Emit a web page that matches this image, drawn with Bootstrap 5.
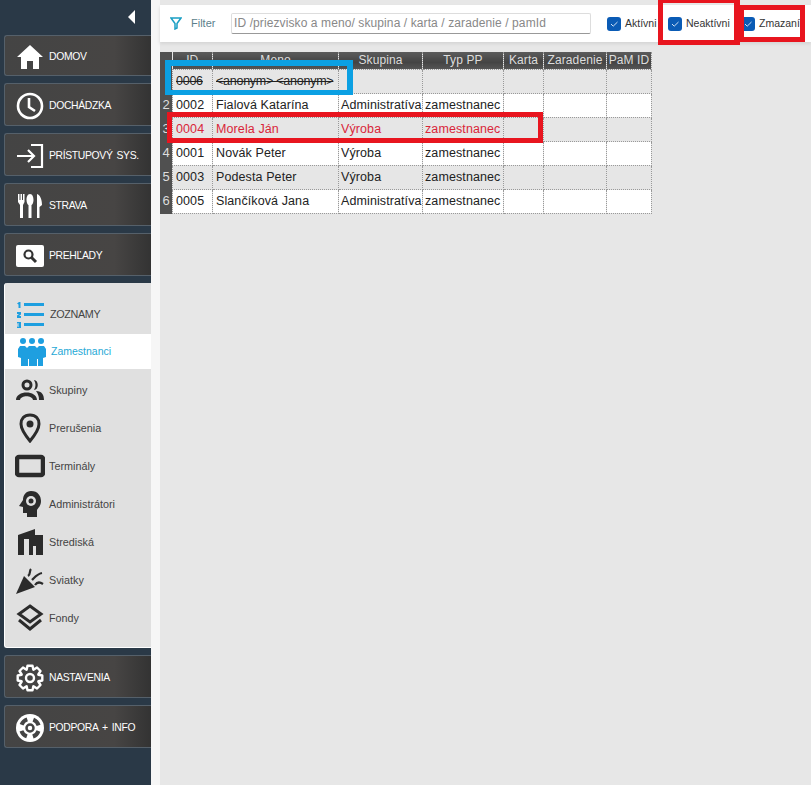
<!DOCTYPE html>
<html lang="sk">
<head>
  <meta charset="UTF-8" />
  <title>Zamestnanci</title>
  <meta name="viewport" content="width=device-width, initial-scale=1" />
  <link href="https://cdn.jsdelivr.net/npm/bootstrap@5.3.3/dist/css/bootstrap.min.css" rel="stylesheet" />
  <style>
    html, body { height: 100%; }
    body { background: #fff; font-family: "Liberation Sans", Arial, sans-serif; overflow: hidden; }
    .app-wrap { width: 811px; height: 785px; position: relative; }
    .side-col { width: 151px; background: #2a3947; padding-left: 4px; flex-shrink: 0; }
    .collapse-row { height: 35px; padding: 10px 16px 0 0; }
    .collapse-tri { width: 0; height: 0; border-top: 7px solid transparent; border-bottom: 7px solid transparent; border-right: 7px solid #fff; }
    .dark-btn { height: 43px; margin-bottom: 7px; gap: 5px; padding: 2px 0 0 11px; color: #fff; font-size: 10.4px; letter-spacing: -.35px; word-spacing: 1.500px; white-space: nowrap;
      background: linear-gradient(90deg, #444 0%, #474544 75%, #333 100%); border: 1px solid #55606a; border-right: 0; border-radius: 3px 0 0 3px; }
    .dark-btn.is-short { height: 41px; }
    .dark-btn svg { width: 28px; height: 28px; flex-shrink: 0; }
    .list-panel { background: #e0e0e0; height: 365px; border-radius: 3px 0 0 3px; margin-bottom: 7px; color: #444; font-size: 10.8px; border-left: 1px solid #fff; border-bottom: 1px solid #fff; }
    .panel-head { height: 51px; padding: 12px 0 0 11px; gap: 6px; letter-spacing: -.35px; }
    .panel-item { height: 38px; padding-left: 10px; gap: 4px; }
    .panel-item svg { width: 30px; height: 30px; flex-shrink: 0; }
    .panel-item.is-active { height: 35px; background: #fff; color: #1fa9d6; font-size: 10.5px; margin-bottom: 2px; padding-left: 12px; gap: 4px; }
    .strip-col { width: 9px; background: #f6f6f6; flex-shrink: 0; }
    .main-col { flex-grow: 1; background: #e7e7e7; padding-top: 5px; }
    .filter-bar { height: 37px; background: #fff; padding-left: 10px; box-shadow: 0 2px 3px #d5d5d5; margin-bottom: 10px; font-size: 10.5px; color: #333; }
    .filter-label { color: #5c7f8c; font-size: 11px; margin-left: 9px; width: 40px; }
    .filter-input { width: 360px; height: 21px; border: 1px solid #ddd; border-bottom-color: #999; border-radius: 2px; padding: 0 2px; font-size: 12px; color: #888; letter-spacing: .1px; }
    .filter-check { width: 14px; height: 14px; background: #0a5bb5; border-radius: 3px; flex-shrink: 0; }
    .filter-check svg { display: block; }
    .check-wrap { gap: 4px; white-space: nowrap; }
    .check-a { width: 61px; }
    .check-b { width: 73px; }
    .people-wrap { width: 492px; display: flex; }
    .row-nums { width: 13px; background: #505050; color: #ddd; font-size: 13px; text-align: center; }
    .row-nums div { height: 24px; line-height: 24px; }
    .row-nums div:first-child { height: 41px; }
    .people-table { table-layout: fixed; width: 479px; border-collapse: collapse; font-size: 12.5px; letter-spacing: .1px; color: #222; }
    .people-table th { height: 17px; padding: 0; background: linear-gradient(#5c5c5c, #444 60%, #555); color: #ddd; font-weight: 400; font-size: 12px; text-align: center; border-right: 1px dotted #999; line-height: 15px; overflow: hidden; }
    .people-table td { height: 24px; padding: 0 0 0 3px; background: #fff; border: 1px dotted #999; white-space: nowrap; overflow: hidden; line-height: 22px; }
    .people-table td:nth-child(n+3) { padding-left: 2px; }
    .people-table tr.row-alt td { background: #e6e6e6; }
    .people-table tr.row-gone td { text-decoration: line-through; letter-spacing: -.25px; }
    .people-table tr.row-red td { color: #d9263a; }
    .hl-box { position: absolute; pointer-events: none; }
    .hl-blue { left: 165px; top: 60px; width: 188px; height: 35px; border: 6px solid #0ba0e3; border-bottom-width: 5px; }
    .hl-red1 { left: 167px; top: 112px; width: 376px; height: 31px; border: 5px solid #e8151f; }
    .hl-red2 { left: 658px; top: 0; width: 82px; height: 45px; border: 5px solid #e8151f; border-top-width: 3px; border-right-width: 6px; }
    .hl-red3 { left: 739px; top: 5px; width: 66px; height: 37px; border: 5px solid #e8151f; }
  </style>
</head>
<body>

<div class="app-wrap d-flex">
  <div class="side-col">
    <div class="collapse-row d-flex justify-content-end"><div class="collapse-tri"></div></div>

    <div class="dark-btn is-short d-flex align-items-center">
      <svg viewBox="0 0 28 28" fill="#fff"><path d="M14 2 1 14h4v12h6v-8h6v8h6V14h4z"/></svg>DOMOV
    </div>
    <div class="dark-btn d-flex align-items-center">
      <svg viewBox="0 0 28 28" fill="none" stroke="#fff" stroke-width="2.6"><circle cx="14" cy="14" r="12"/><path d="M13 6v9l6 4"/></svg>DOCHÁDZKA
    </div>
    <div class="dark-btn d-flex align-items-center">
      <svg viewBox="0 0 28 28" fill="none" stroke="#fff" stroke-width="2.2"><path d="M15 3h11v22H15M1 14h17M12 8l6 6-6 6"/></svg>PRÍSTUPOVÝ SYS.
    </div>
    <div class="dark-btn d-flex align-items-center">
      <svg viewBox="0 0 28 28" fill="#fff"><path d="M2 2h1.500v6h1V2H6v6h1V2h1.500v8L7 13v13H4V13l-2-3zM14 2c2.500 0 3.500 3 3.500 6S16 13 15.500 13v13h-3V13C12 13 10.500 11 10.500 8S11.500 2 14 2zM21 2c3 1 5 5 5 11l-2.500 2v11H21z"/></svg>STRAVA
    </div>
    <div class="dark-btn d-flex align-items-center">
      <svg viewBox="0 0 28 28"><rect y="3" width="28" height="22" rx="2" fill="#fff"/><circle cx="12.500" cy="12.500" r="4" fill="none" stroke="#333" stroke-width="2.200"/><path d="m15.500 15.500 4.500 4.500" stroke="#333" stroke-width="3"/></svg>PREHĽADY
    </div>

    <div class="list-panel">
      <div class="panel-head d-flex align-items-center">
        <svg width="28" height="26" viewBox="0 0 28 26" fill="#1e9fe0"><path d="M1 1.500 3 0h1.500v6h-2V2.500zM1 10h4v2.500L3 14h2v2H1v-2.500L3 12H1zM1 20h4v6H1v-1.500h2v-1H1.500v-1H3v-1H1z"/><rect x="8" y="1" width="20" height="3"/><rect x="8" y="11" width="20" height="3"/><rect x="8" y="21" width="20" height="3"/></svg>
        <span>ZOZNAMY</span>
      </div>
      <div class="panel-item is-active d-flex align-items-center">
        <svg viewBox="0 0 30 30" fill="#1e9fe0"><circle cx="6" cy="4" r="3"/><circle cx="15" cy="4" r="3"/><circle cx="24" cy="4" r="3"/><path d="M3 9h5l2 2 2-2h6l2 2 2-2h5l2 3v8l-3 1v8h-5v-7h-1v7h-8v-7h-1v7H4v-8l-3-1v-8z"/></svg>Zamestnanci
      </div>
      <div class="panel-item d-flex align-items-center">
        <svg viewBox="0 0 30 30" fill="#2b2b2b"><circle cx="12" cy="10" r="4" fill="none" stroke="#2b2b2b" stroke-width="3"/><path d="M19 5c5 0 5 10 0 10 2-3 2-7 0-10zM1 25c0-10 21-10 21 0h-4c-1-5-12-5-13 0zM21 16c6 0 8 4 8 9h-5c0-4-1-6-3-9z"/></svg>Skupiny
      </div>
      <div class="panel-item d-flex align-items-center">
        <svg viewBox="0 0 30 30"><path d="M15 2C9 2 6 6 6 11c0 6 9 17 9 17s9-11 9-17c0-5-3-9-9-9z" fill="none" stroke="#2b2b2b" stroke-width="3"/><circle cx="15" cy="11" r="3.500" fill="#2b2b2b"/></svg>Prerušenia
      </div>
      <div class="panel-item d-flex align-items-center">
        <svg viewBox="0 0 30 30"><rect x="2" y="6" width="26" height="18" rx="2" fill="none" stroke="#2b2b2b" stroke-width="4.500"/></svg>Terminály
      </div>
      <div class="panel-item d-flex align-items-center">
        <svg viewBox="0 0 30 30" fill="#2b2b2b"><path d="M16 2c7 0 10 5 10 10 0 5-3 7-4 9v7H12v-4H8v-6l-4-1 4-6c0-5 3-9 8-9z"/><circle cx="16" cy="12" r="5" fill="#e0e0e0"/><circle cx="16" cy="12" r="2.500"/></svg>Administrátori
      </div>
      <div class="panel-item d-flex align-items-center">
        <svg viewBox="0 0 30 30" fill="#2b2b2b"><path d="M3 8 20 2v6h8v20h-7v-9h-3v9h-4V12H9v16H3z"/></svg>Strediská
      </div>
      <div class="panel-item d-flex align-items-center">
        <svg viewBox="0 0 30 30" fill="#2b2b2b"><path d="M1 29 9 11l11 11z"/><path d="M13 11c3-2 1-5 3-7M17 15c3-3 5-6 10-7M20 20c2-3 5-3 8-1" fill="none" stroke="#2b2b2b" stroke-width="2.200"/></svg>Sviatky
      </div>
      <div class="panel-item d-flex align-items-center">
        <svg viewBox="0 0 30 30" fill="none" stroke="#2b2b2b" stroke-width="3"><path d="m15 3 11 8-11 8-11-8z"/><path d="m4 17 11 9 11-9"/></svg>Fondy
      </div>
    </div>

    <div class="dark-btn d-flex align-items-center">
      <svg viewBox="0 0 28 28" fill="none" stroke="#fff" stroke-width="2.400"><polygon id="gearOutline" stroke-linejoin="round"/><circle cx="14" cy="14" r="4"/></svg>NASTAVENIA
    </div>
    <div class="dark-btn d-flex align-items-center">
      <svg viewBox="0 0 28 28"><circle cx="14" cy="14" r="14" fill="#fff"/><circle cx="14" cy="14" r="9" fill="none" stroke="#444" stroke-width="4" stroke-dasharray="8 6.140" stroke-dashoffset="-3.070"/><circle cx="14" cy="14" r="3.500" fill="none" stroke="#444" stroke-width="2.500"/></svg>PODPORA + INFO
    </div>
  </div>

  <div class="strip-col"></div>

  <div class="main-col">
    <div class="filter-bar d-flex align-items-center">
      <svg width="12" height="13" viewBox="0 0 12 13" fill="none" stroke="#1a9fc4" stroke-width="1.500"><path d="M1 1h10L7 6.500V11L5 12V6.500z"/></svg>
      <span class="filter-label">Filter</span>
      <div class="filter-input">ID /priezvisko a meno/ skupina / karta / zaradenie / pamId</div>
      <div class="check-wrap check-a d-flex align-items-center ms-3">
        <div class="filter-check"><svg viewBox="0 0 14 14" fill="none" stroke="#cfe2f5" stroke-width="1"><path d="m4 7 2.200 2.200L10.500 5"/></svg></div>Aktívni
      </div>
      <div class="check-wrap check-b d-flex align-items-center">
        <div class="filter-check"><svg viewBox="0 0 14 14" fill="none" stroke="#cfe2f5" stroke-width="1"><path d="m4 7 2.200 2.200L10.500 5"/></svg></div>Neaktívni
      </div>
      <div class="check-wrap d-flex align-items-center">
        <div class="filter-check"><svg viewBox="0 0 14 14" fill="none" stroke="#cfe2f5" stroke-width="1"><path d="m4 7 2.200 2.200L10.500 5"/></svg></div>Zmazaní
      </div>
    </div>

    <div class="people-wrap">
      <div class="row-nums">
        <div></div><div>2</div><div>3</div><div>4</div><div>5</div><div>6</div>
      </div>
      <table class="people-table">
        <colgroup>
          <col style="width:40px"><col style="width:126px"><col style="width:84px"><col style="width:81px"><col style="width:40px"><col style="width:63px"><col style="width:45px">
        </colgroup>
        <thead>
          <tr><th>ID</th><th>Meno</th><th>Skupina</th><th>Typ PP</th><th>Karta</th><th>Zaradenie</th><th>PaM ID</th></tr>
        </thead>
        <tbody id="peopleRows"></tbody>
      </table>
    </div>
  </div>

  <div class="hl-box hl-blue"></div>
  <div class="hl-box hl-red1"></div>
  <div class="hl-box hl-red2"></div>
  <div class="hl-box hl-red3"></div>
</div>

<script>
  const people = [
    ["0006", "<anonym> <anonym>", "", "", "row-alt row-gone"],
    ["0002", "Fialová Katarína", "Administratíva", "zamestnanec", ""],
    ["0004", "Morela Ján", "Výroba", "zamestnanec", "row-alt row-red"],
    ["0001", "Novák Peter", "Výroba", "zamestnanec", ""],
    ["0003", "Podesta Peter", "Výroba", "zamestnanec", "row-alt"],
    ["0005", "Slančíková Jana", "Administratíva", "zamestnanec", ""]
  ];
  const body = document.getElementById("peopleRows");
  people.forEach(p => {
    const tr = document.createElement("tr");
    tr.className = p[4];
    [p[0], p[1], p[2], p[3], "", "", ""].forEach(v => {
      const td = document.createElement("td");
      td.textContent = v;
      tr.appendChild(td);
    });
    body.appendChild(tr);
  });

  // gear outline: 8 teeth
  const pts = [];
  for (let i = 0; i < 8; i++) {
    const a = i * Math.PI / 4;
    [[-.38, 9], [-.2, 12.6], [.2, 12.6], [.38, 9]].forEach(([d, r]) => {
      pts.push((14 + r * Math.sin(a + d)).toFixed(1) + "," + (14 - r * Math.cos(a + d)).toFixed(1));
    });
  }
  document.getElementById("gearOutline").setAttribute("points", pts.join(" "));
</script>

<script src="https://cdn.jsdelivr.net/npm/bootstrap@5.3.3/dist/js/bootstrap.bundle.min.js"></script>
</body>
</html>
